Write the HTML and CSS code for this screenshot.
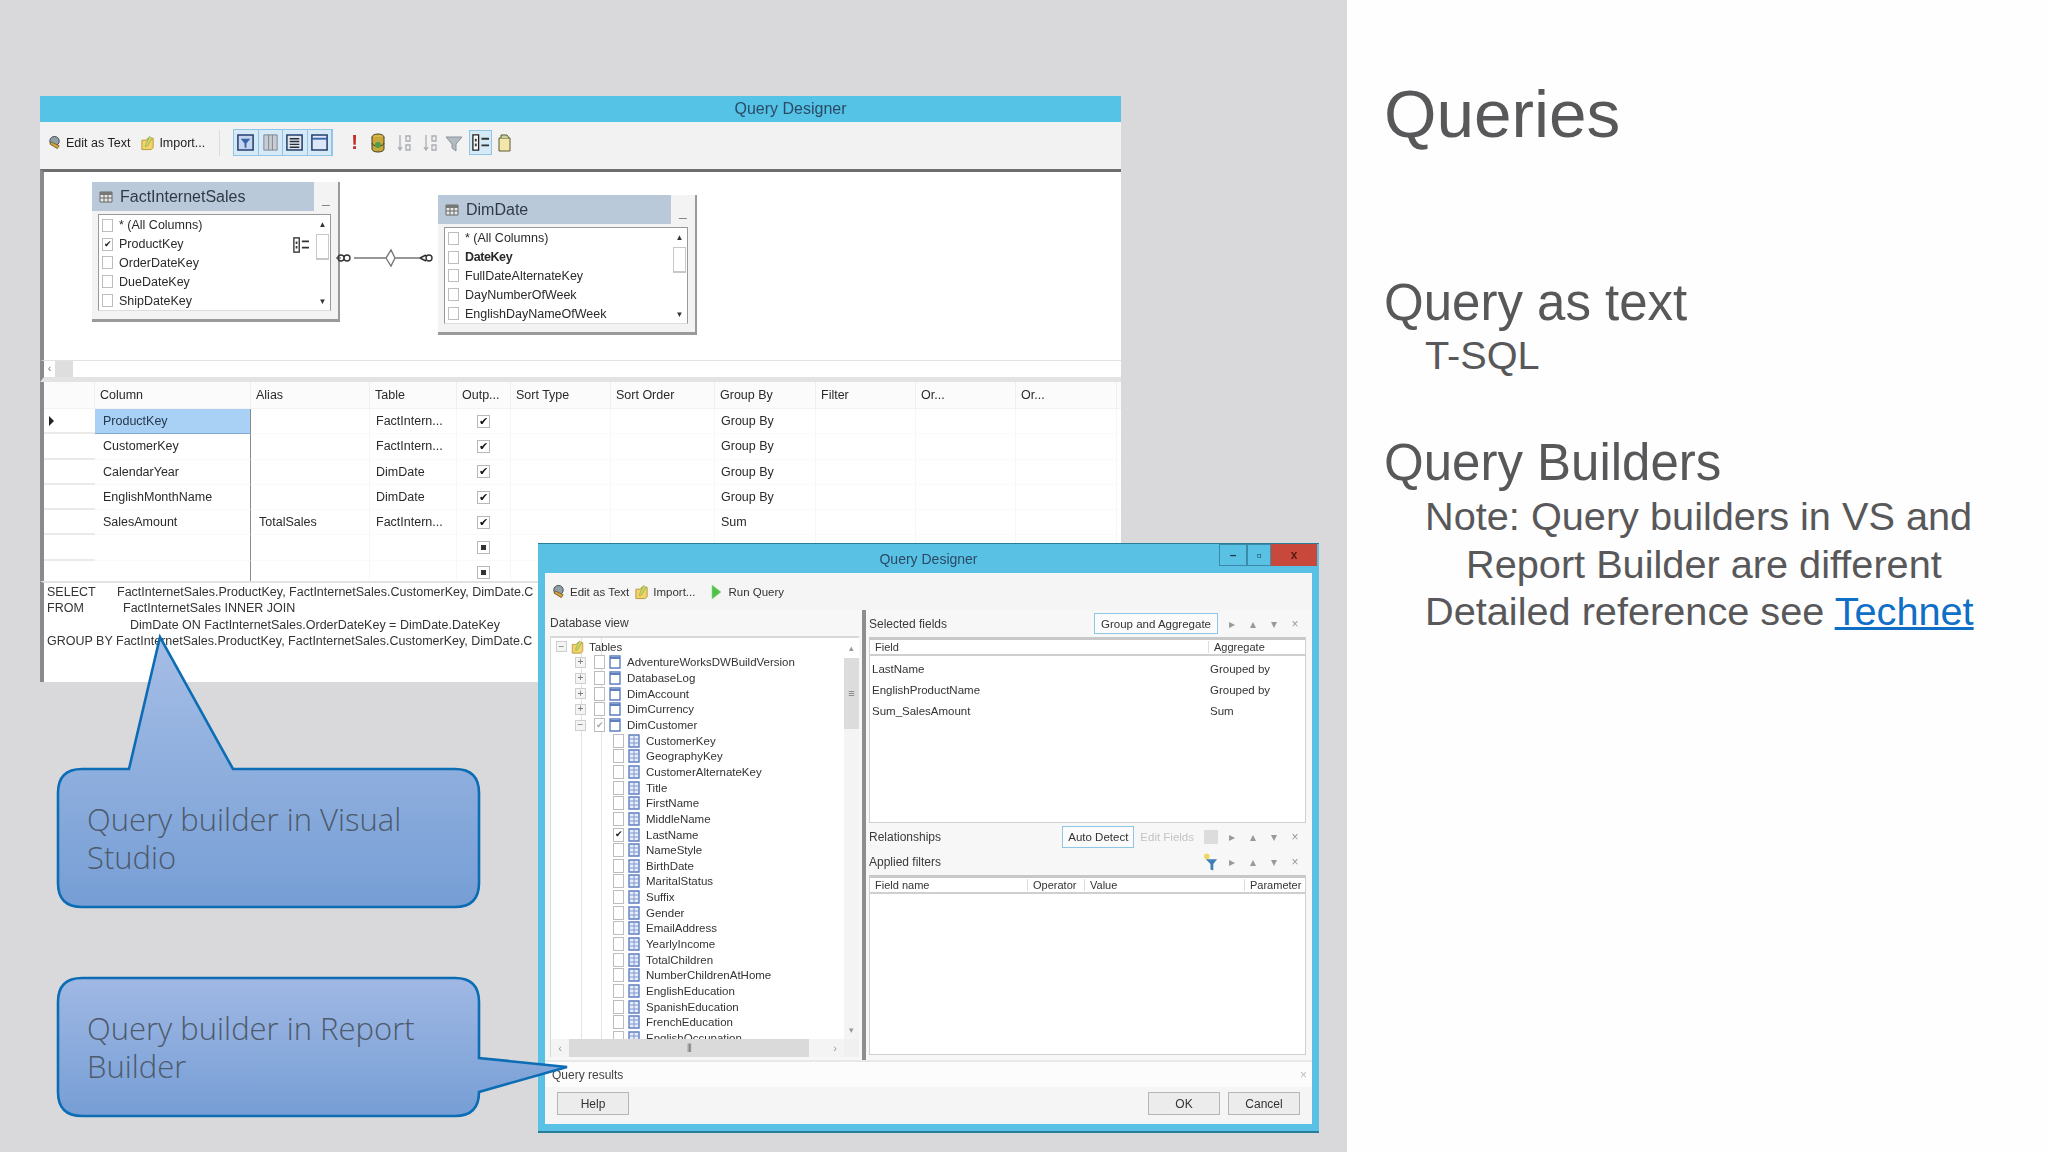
FILE: index.html
```html
<!DOCTYPE html>
<html lang="en">
<head>
<meta charset="utf-8">
<title>Queries</title>
<link rel="stylesheet" href="styles.css">
</head>
<body>
<svg class="defs" width="0" height="0" aria-hidden="true">
  <defs>
    <symbol id="i-table" viewBox="0 0 14 14"><path d="M1 2h12v10H1z" fill="#e8e8e8" stroke="#666"/><path d="M1 2h12v3H1z" fill="#777"/><path d="M5 5v7M9 5v7M1 8h12" stroke="#666"/></symbol>
    <symbol id="i-col" viewBox="0 0 12 14"><path d="M1 1h10v12H1z" fill="#e6ecf9" stroke="#5f7fc0" stroke-width="1.4"/><path d="M6 1v12M1 5h10M1 9h10" stroke="#7f98d0"/></symbol>
    <symbol id="i-tbl" viewBox="0 0 12 14"><path d="M1 1h10v12H1z" fill="#fff" stroke="#5f7fbf" stroke-width="1.4"/><path d="M1 3h10" stroke="#5f7fbf" stroke-width="2"/></symbol>
    <symbol id="i-edit" viewBox="0 0 16 16"><circle cx="8" cy="6" r="5" fill="#8fa0a8" stroke="#444"/><path d="M3 9l8 5 2-3-8-4z" fill="#d8a23a" stroke="#5a4a20" stroke-width=".7"/></symbol>
    <symbol id="i-folder" viewBox="0 0 16 16"><path d="M2 5h5l1-2h6v10l-2 2H2z" fill="#f1d36b" stroke="#b8983a"/><path d="M10 1l3 2-5 8-2 1 0-2z" fill="#c9d96a" stroke="#8a9a3a" stroke-width=".6"/></symbol>
    <symbol id="i-play" viewBox="0 0 12 16"><path d="M2 1l9 7-9 7z" fill="#53c04a" stroke="#8ddc84" stroke-width=".6"/></symbol>
    <symbol id="i-diagram" viewBox="0 0 20 22"><path d="M2 3h16v16H2z" fill="#c5d5ef" stroke="#24406f" stroke-width="1.6"/><path d="M5 7h10l-4 5v5l-2-1v-4z" fill="#3b64a8"/></symbol>
    <symbol id="i-grid" viewBox="0 0 20 22"><path d="M3 3h14v16H3z" fill="#c9ccd2" stroke="#7d8592"/><path d="M8 3v16M12 3v16" stroke="#7d8592"/></symbol>
    <symbol id="i-sql" viewBox="0 0 20 22"><path d="M2 3h16v16H2z" fill="#dfe3ea" stroke="#24406f" stroke-width="1.6"/><path d="M5 7h10M5 10h10M5 13h10M5 16h10" stroke="#24303f" stroke-width="1.5"/></symbol>
    <symbol id="i-result" viewBox="0 0 20 22"><path d="M2 3h16v16H2z" fill="#dde7f7" stroke="#24406f" stroke-width="1.6"/><path d="M2 7h16" stroke="#3b64a8" stroke-width="2"/></symbol>
    <symbol id="i-db" viewBox="0 0 16 22"><ellipse cx="8" cy="5" rx="6" ry="3" fill="#d8b648" stroke="#4a4020"/><path d="M2 5v12c0 4 12 4 12 0V5" fill="#c7a83a" stroke="#4a4020"/><path d="M2 11c0 4 12 4 12 0" fill="none" stroke="#4a4020"/><circle cx="8" cy="13" r="3" fill="#4f9c4a"/></symbol>
    <symbol id="i-sort" viewBox="0 0 16 22"><path d="M4 3v15M2 15l2 3 2-3M10 4h4v5h-4zM10 13h4v5h-4z" fill="none" stroke="#a9adb2" stroke-width="1.3"/></symbol>
    <symbol id="i-funnel" viewBox="0 0 18 22"><path d="M1 5h16l-6 7v7l-4-3v-4z" fill="#b4bac2" stroke="#8b929b"/></symbol>
    <symbol id="i-key" viewBox="0 0 20 18"><path d="M2 1h6v16H2zM2 1h3M2 17h3" fill="#fff" stroke="#222" stroke-width="1.4"/><path d="M4 5h2v3H4zM4 10h2v3H4z" fill="#3a3a3a"/><path d="M11 5h8M11 12h8" stroke="#333" stroke-width="2"/></symbol>
    <symbol id="i-note" viewBox="0 0 16 22"><path d="M2 6h11v13H2z" fill="#f3e6a8" stroke="#5b5b3a"/><path d="M4 6V3h6l2 3" fill="#c9d49a" stroke="#5b5b3a"/></symbol>
    <symbol id="i-filter" viewBox="0 0 16 20"><circle cx="4" cy="4" r="3" fill="#f0d860"/><path d="M3 7h12l-4 5v7l-3-1v-6z" fill="#3f7fb5"/></symbol>
  </defs>
</svg>

<main class="slide">
  <section class="canvas">
    <div class="window vs">
      <div class="vs-title">Query Designer</div>
      <div class="vs-toolbar">
        <svg class="ti"><use href="#i-edit"/></svg><span class="tt">Edit as Text</span>
        <svg class="ti ti-gap"><use href="#i-folder"/></svg><span class="tt">Import...</span>
        <span class="tsep"></span>
        <span class="tgroup">
          <span class="tb"><svg><use href="#i-diagram"/></svg></span>
          <span class="tb"><svg><use href="#i-grid"/></svg></span>
          <span class="tb"><svg><use href="#i-sql"/></svg></span>
          <span class="tb"><svg><use href="#i-result"/></svg></span>
        </span>
        <span class="bang">!</span>
        <svg class="ts ts-db"><use href="#i-db"/></svg>
        <svg class="ts ts-a"><use href="#i-sort"/></svg>
        <svg class="ts ts-b"><use href="#i-sort"/></svg>
        <svg class="ts ts-c"><use href="#i-funnel"/></svg>
        <span class="tb tb-active"><svg><use href="#i-key"/></svg></span>
        <svg class="ts ts-d"><use href="#i-note"/></svg>
      </div>

      <div class="diagram">
        <div class="tbl tbl-fact">
          <div class="tbl-head"><div class="tbl-name"><svg class="tbl-ic"><use href="#i-table"/></svg>FactInternetSales</div><span class="tbl-min">_</span></div>
          <div class="tbl-list">
            <div class="tbl-rows">
              <div class="tr"><span class="box"></span>* (All Columns)</div>
              <div class="tr"><span class="box on">✔</span>ProductKey<svg class="keyi"><use href="#i-key"/></svg></div>
              <div class="tr"><span class="box"></span>OrderDateKey</div>
              <div class="tr"><span class="box"></span>DueDateKey</div>
              <div class="tr"><span class="box"></span>ShipDateKey</div>
            </div>
            <div class="tbl-bar"><span class="sb-up">▲</span><span class="sb-thumb"></span><span class="sb-dn">▼</span></div>
          </div>
        </div>
        <svg class="link" viewBox="0 0 100 24"><path d="M0 13h5M18 13h32l5-8 4 8-4 8-5-8M59 13h25" fill="none" stroke="#777" stroke-width="1.4"/><path d="M2 13a3 3 0 1 0 6 0a3 3 0 1 0-6 0M8 13a3 3 0 1 0 6 0a3 3 0 1 0-6 0M84 13l6-3M84 13l6 3M90 13a3 3 0 1 0 6 0a3 3 0 1 0-6 0" fill="none" stroke="#333" stroke-width="1.4"/></svg>
        <div class="tbl tbl-dim">
          <div class="tbl-head"><div class="tbl-name"><svg class="tbl-ic"><use href="#i-table"/></svg>DimDate</div><span class="tbl-min">_</span></div>
          <div class="tbl-list">
            <div class="tbl-rows">
              <div class="tr"><span class="box"></span>* (All Columns)</div>
              <div class="tr tr-b"><span class="box"></span>DateKey</div>
              <div class="tr"><span class="box"></span>FullDateAlternateKey</div>
              <div class="tr"><span class="box"></span>DayNumberOfWeek</div>
              <div class="tr"><span class="box"></span>EnglishDayNameOfWeek</div>
            </div>
            <div class="tbl-bar"><span class="sb-up">▲</span><span class="sb-thumb"></span><span class="sb-dn">▼</span></div>
          </div>
        </div>
      </div>

      <div class="vs-hscroll"><span class="hs-arrow">‹</span><span class="hs-thumb"></span></div>

      <div class="qgrid">
        <div class="gh gh0"></div><div class="gh">Column</div><div class="gh">Alias</div><div class="gh">Table</div><div class="gh">Outp...</div><div class="gh">Sort Type</div><div class="gh">Sort Order</div><div class="gh">Group By</div><div class="gh">Filter</div><div class="gh">Or...</div><div class="gh">Or...</div><div class="gh"></div>

        <div class="gc g0"><span class="cursor"></span></div><div class="gc g1 sel">ProductKey</div><div class="gc g2"></div><div class="gc">FactIntern...</div><div class="gc gk"><span class="chk">✔</span></div><div class="gc"></div><div class="gc"></div><div class="gc">Group By</div><div class="gc"></div><div class="gc"></div><div class="gc"></div><div class="gc"></div>

        <div class="gc g0"></div><div class="gc g1">CustomerKey</div><div class="gc g2"></div><div class="gc">FactIntern...</div><div class="gc gk"><span class="chk">✔</span></div><div class="gc"></div><div class="gc"></div><div class="gc">Group By</div><div class="gc"></div><div class="gc"></div><div class="gc"></div><div class="gc"></div>

        <div class="gc g0"></div><div class="gc g1">CalendarYear</div><div class="gc g2"></div><div class="gc">DimDate</div><div class="gc gk"><span class="chk">✔</span></div><div class="gc"></div><div class="gc"></div><div class="gc">Group By</div><div class="gc"></div><div class="gc"></div><div class="gc"></div><div class="gc"></div>

        <div class="gc g0"></div><div class="gc g1">EnglishMonthName</div><div class="gc g2"></div><div class="gc">DimDate</div><div class="gc gk"><span class="chk">✔</span></div><div class="gc"></div><div class="gc"></div><div class="gc">Group By</div><div class="gc"></div><div class="gc"></div><div class="gc"></div><div class="gc"></div>

        <div class="gc g0"></div><div class="gc g1">SalesAmount</div><div class="gc g2">TotalSales</div><div class="gc">FactIntern...</div><div class="gc gk"><span class="chk">✔</span></div><div class="gc"></div><div class="gc"></div><div class="gc">Sum</div><div class="gc"></div><div class="gc"></div><div class="gc"></div><div class="gc"></div>

        <div class="gc g0"></div><div class="gc g1"></div><div class="gc g2"></div><div class="gc"></div><div class="gc gk"><span class="chk ind"></span></div><div class="gc"></div><div class="gc"></div><div class="gc"></div><div class="gc"></div><div class="gc"></div><div class="gc"></div><div class="gc"></div>

        <div class="gc g0"></div><div class="gc g1"></div><div class="gc g2"></div><div class="gc"></div><div class="gc gk"><span class="chk ind"></span></div><div class="gc"></div><div class="gc"></div><div class="gc"></div><div class="gc"></div><div class="gc"></div><div class="gc"></div><div class="gc"></div>
      </div>

      <div class="sql">
        <div class="sql-l"><span class="kw">SELECT</span><span class="s1">FactInternetSales.ProductKey, FactInternetSales.CustomerKey, DimDate.C</span></div>
        <div class="sql-l"><span class="kw">FROM</span><span class="s2">FactInternetSales INNER JOIN</span></div>
        <div class="sql-l"><span class="s3">DimDate ON FactInternetSales.OrderDateKey = DimDate.DateKey</span></div>
        <div class="sql-l">GROUP BY FactInternetSales.ProductKey, FactInternetSales.CustomerKey, DimDate.C</div>
      </div>
    </div>

    <div class="callout callout-vs">
      <svg class="callout-shape" viewBox="0 -132 421 270">
        <defs><linearGradient id="g1" x1="0" y1="0" x2="0" y2="1"><stop offset="0" stop-color="#a6bee6"/><stop offset="1" stop-color="#769ed5"/></linearGradient></defs>
        <path d="M24 0H71L102-132 175 0H397Q421 0 421 24V114Q421 138 397 138H24Q0 138 0 114V24Q0 0 24 0Z" fill="url(#g1)" stroke="#0c6db5" stroke-width="2.6"/>
      </svg>
      <p class="callout-text">Query builder in Visual Studio</p>
    </div>

    <div class="window rb">
      <div class="rb-title">
        <span class="rb-title-text">Query Designer</span>
        <div class="rb-controls"><span class="wc wc-min">–</span><span class="wc wc-max">▫</span><span class="wc wc-close">x</span></div>
      </div>
      <div class="rb-inner">
        <div class="rb-toolbar">
          <svg class="ti"><use href="#i-edit"/></svg><span class="rt">Edit as Text</span>
          <svg class="ti ti-gap2"><use href="#i-folder"/></svg><span class="rt">Import...</span>
          <svg class="ti-play"><use href="#i-play"/></svg><span class="rt">Run Query</span>
        </div>
        <div class="rb-main">
          <div class="rb-left">
            <div class="rb-label">Database view</div>
            <div class="tree-frame">
              <div class="tree">
                <div class="node n0"><span class="exp">−</span><svg class="fold"><use href="#i-folder"/></svg>Tables</div>
                <div class="node n1"><span class="exp">+</span><span class="box"></span><svg class="ni"><use href="#i-tbl"/></svg>AdventureWorksDWBuildVersion</div>
                <div class="node n1"><span class="exp">+</span><span class="box"></span><svg class="ni"><use href="#i-tbl"/></svg>DatabaseLog</div>
                <div class="node n1"><span class="exp">+</span><span class="box"></span><svg class="ni"><use href="#i-tbl"/></svg>DimAccount</div>
                <div class="node n1"><span class="exp">+</span><span class="box"></span><svg class="ni"><use href="#i-tbl"/></svg>DimCurrency</div>
                <div class="node n1"><span class="exp">−</span><span class="box part">✔</span><svg class="ni"><use href="#i-tbl"/></svg>DimCustomer</div>
                <div class="node n2"><span class="box"></span><svg class="ni"><use href="#i-col"/></svg>CustomerKey</div>
                <div class="node n2"><span class="box"></span><svg class="ni"><use href="#i-col"/></svg>GeographyKey</div>
                <div class="node n2"><span class="box"></span><svg class="ni"><use href="#i-col"/></svg>CustomerAlternateKey</div>
                <div class="node n2"><span class="box"></span><svg class="ni"><use href="#i-col"/></svg>Title</div>
                <div class="node n2"><span class="box"></span><svg class="ni"><use href="#i-col"/></svg>FirstName</div>
                <div class="node n2"><span class="box"></span><svg class="ni"><use href="#i-col"/></svg>MiddleName</div>
                <div class="node n2"><span class="box on">✔</span><svg class="ni"><use href="#i-col"/></svg>LastName</div>
                <div class="node n2"><span class="box"></span><svg class="ni"><use href="#i-col"/></svg>NameStyle</div>
                <div class="node n2"><span class="box"></span><svg class="ni"><use href="#i-col"/></svg>BirthDate</div>
                <div class="node n2"><span class="box"></span><svg class="ni"><use href="#i-col"/></svg>MaritalStatus</div>
                <div class="node n2"><span class="box"></span><svg class="ni"><use href="#i-col"/></svg>Suffix</div>
                <div class="node n2"><span class="box"></span><svg class="ni"><use href="#i-col"/></svg>Gender</div>
                <div class="node n2"><span class="box"></span><svg class="ni"><use href="#i-col"/></svg>EmailAddress</div>
                <div class="node n2"><span class="box"></span><svg class="ni"><use href="#i-col"/></svg>YearlyIncome</div>
                <div class="node n2"><span class="box"></span><svg class="ni"><use href="#i-col"/></svg>TotalChildren</div>
                <div class="node n2"><span class="box"></span><svg class="ni"><use href="#i-col"/></svg>NumberChildrenAtHome</div>
                <div class="node n2"><span class="box"></span><svg class="ni"><use href="#i-col"/></svg>EnglishEducation</div>
                <div class="node n2"><span class="box"></span><svg class="ni"><use href="#i-col"/></svg>SpanishEducation</div>
                <div class="node n2"><span class="box"></span><svg class="ni"><use href="#i-col"/></svg>FrenchEducation</div>
                <div class="node n2"><span class="box"></span><svg class="ni"><use href="#i-col"/></svg>EnglishOccupation</div>
              </div>
              <div class="tree-v"><span class="tv-up">▴</span><span class="tv-thumb">≡</span><span class="tv-dn">▾</span></div>
              <div class="tree-h"><span class="th-arrow">‹</span><span class="th-thumb">⦀</span><span class="th-arrow th-r">›</span></div>
              <div class="tree-corner"></div>
            </div>
          </div>
          <div class="rb-split"></div>
          <div class="rb-right">
            <div class="pane-head">
              <span class="rb-label">Selected fields</span>
              <span class="btn-flat btn-ga">Group and Aggregate</span>
              <span class="arrows"><i>▸</i><i>▴</i><i>▾</i><i>×</i></span>
            </div>
            <div class="list-frame list-fields">
              <div class="lf-head lf-fields"><span>Field</span><span>Aggregate</span></div>
              <div class="lf-row lf-fields"><span>LastName</span><span>Grouped by</span></div>
              <div class="lf-row lf-fields"><span>EnglishProductName</span><span>Grouped by</span></div>
              <div class="lf-row lf-fields"><span>Sum_SalesAmount</span><span>Sum</span></div>
            </div>
            <div class="pane-head pane-rel">
              <span class="rb-label">Relationships</span>
              <span class="btn-flat btn-ad">Auto Detect</span>
              <span class="dim">Edit Fields</span>
              <span class="mini-box"></span>
              <span class="arrows"><i>▸</i><i>▴</i><i>▾</i><i>×</i></span>
            </div>
            <div class="pane-head pane-fil">
              <span class="rb-label">Applied filters</span>
              <svg class="fil"><use href="#i-filter"/></svg>
              <span class="arrows arrows-fil"><i>▸</i><i>▴</i><i>▾</i><i>×</i></span>
            </div>
            <div class="list-frame list-filters">
              <div class="lf-head lf-filt"><span>Field name</span><span>Operator</span><span>Value</span><span>Parameter</span></div>
            </div>
          </div>
        </div>
        <div class="rb-results"><span>Query results</span><i>×</i></div>
        <div class="rb-foot">
          <span class="btn">Help</span>
          <span class="btn btn-ok">OK</span>
          <span class="btn">Cancel</span>
        </div>
      </div>
    </div>

    <div class="callout callout-rb">
      <svg class="callout-shape callout-shape-rb" viewBox="0 0 510 138">
        <defs><linearGradient id="g2" x1="0" y1="0" x2="0" y2="1"><stop offset="0" stop-color="#a0b8e4"/><stop offset="1" stop-color="#769ed5"/></linearGradient></defs>
        <path d="M24 0H397Q421 0 421 24V80L509 89 421 114Q421 138 397 138H24Q0 138 0 114V24Q0 0 24 0Z" fill="url(#g2)" stroke="#0c6db5" stroke-width="2.6"/>
      </svg>
      <p class="callout-text">Query builder in Report Builder</p>
    </div>
  </section>

  <section class="notes">
    <h1 class="n-title">Queries</h1>
    <h2 class="n-h n-h-first">Query as text</h2>
    <p class="n-p n-p-tsql">T-SQL</p>
    <h2 class="n-h n-h-second">Query Builders</h2>
    <p class="n-p n-p-note">Note: Query builders in VS and Report Builder are different</p>
    <p class="n-p">Detailed reference see <a class="n-link" href="#">Technet</a></p>
  </section>
</main>
</body>
</html>
```

FILE: styles.css
```css
* { box-sizing: border-box; }
html, body { margin: 0; padding: 0; height: 100%; }
body { background: #fefefe; font-family: "Liberation Sans", Arial, sans-serif; overflow: hidden; }
.defs { position: absolute; }
.slide { display: flex; width: 2048px; height: 1152px; }
.canvas { position: relative; width: 1347px; height: 1152px; background: #d9d9db; flex: none; }

/* right column */
.notes { flex: 1; padding: 74px 0 0 37px; color: #58585a; }
.n-title { margin: 0; font-weight: 400; font-size: 67.5px; line-height: 80px; }
.n-h { margin: 0; font-weight: 400; font-size: 51px; line-height: 60px; }
.n-h-first { margin-top: 119px; }
.n-h-second { margin-top: 53px; }
.n-p { margin: 0 0 0 82px; font-size: 39.7px; line-height: 47.8px; text-indent: -41px; max-width: 580px; }
.n-p-tsql { margin-top: -1px; }
.n-p-note { margin-top: 0; }
.n-link { color: #0f6fc6; text-decoration: underline; }

/* shared */
.window { position: absolute; filter: blur(.7px); color: #333; font-size: 13px; }
.box { display: inline-flex; align-items: center; justify-content: center; flex: none; width: 11px; height: 13px; border: 1px solid #bdbdbd; background: #fff; font-size: 9px; line-height: 1; color: #222; }
.part { color: #aaa; }

/* visual studio window */
.vs { left: 40px; top: 96px; width: 1081px; height: 586px; background: #fff; display: flex; flex-direction: column; }
.vs-title { flex: none; height: 26px; background: #54c3e6; padding-left: 420px; display: flex; align-items: center; justify-content: center; font-size: 16px; color: #2b4a66; }
.vs-toolbar { flex: none; height: 47px; background: #f2f2f2; display: flex; align-items: center; padding: 0 0 6px 7px; }
.ti { width: 15px; height: 16px; flex: none; margin-right: 4px; }
.ti-gap { margin-left: 10px; }
.tt { font-size: 12.5px; color: #222; }
.tsep { width: 1px; height: 26px; background: #dcdcdc; margin: 0 13px 0 14px; }
.tgroup { display: flex; border: 1px solid #8fc6e6; background: #d5e9f7; }
.tb { display: flex; align-items: center; justify-content: center; width: 24.5px; height: 25px; background: #d5e9f7; border-right: 1px solid #8fc6e6; }
.tb svg { width: 19px; height: 21px; }
.bang { font-size: 20px; font-weight: 700; color: #c02a20; margin-left: 18px; width: 10px; }
.ts { width: 16px; height: 22px; flex: none; }
.ts-db { margin-left: 9px; }
.ts-a { margin-left: 10px; }
.ts-b { margin-left: 10px; }
.ts-c { margin-left: 7px; width: 18px; }
.tb-active { margin-left: 6px; border: 1px solid #8fc6e6; width: 23px; }
.ts-d { margin-left: 5px; }

.diagram { flex: none; position: relative; height: 191px; background: #fff; border-top: 3px solid #6e6e6e; border-left: 4px solid #8a8a8a; }
.tbl { position: absolute; background: #f3f3f3; border-right: 2px solid #9a9a9a; border-bottom: 3px solid #9a9a9a; display: flex; flex-direction: column; }
.tbl-fact { left: 48px; top: 10px; width: 248px; height: 140px; }
.tbl-dim { left: 394px; top: 23px; width: 259px; height: 140px; }
.tbl-head { flex: none; height: 29px; display: flex; }
.tbl-name { flex: 1; background: #b9c9d9; display: flex; align-items: center; font-size: 16px; color: #2f3a46; padding-left: 7px; }
.tbl-ic { width: 14px; height: 14px; margin-right: 7px; flex: none; }
.tbl-min { width: 24px; display: flex; align-items: flex-end; justify-content: center; font-weight: 700; background: #f3f3f3; padding-bottom: 4px; font-size: 14px; }
.tbl-list { flex: none; display: flex; margin: 3px 7px 0 6px; height: 97px; background: #fff; border: 1px solid #999; border-bottom-color: #ddd; }
.tbl-rows { flex: 1; overflow: hidden; position: relative; }
.tr { position: relative; display: flex; align-items: center; gap: 6px; height: 18.8px; font-size: 12.5px; color: #2a2a2a; padding-left: 3px; white-space: nowrap; }
.tr:first-child { margin-top: 1px; }
.tr-b { font-weight: 700; letter-spacing: -.4px; }
.keyi { position: absolute; right: 4px; top: 2px; width: 20px; height: 16px; }
.tbl-bar { flex: none; width: 15px; display: flex; flex-direction: column; align-items: center; font-size: 8px; background: #fff; color: #333; }
.sb-up { height: 19px; line-height: 19px; }
.sb-thumb { width: 13px; height: 26px; border: 1px solid #c8c8c8; border-bottom-width: 2px; }
.sb-dn { margin-top: auto; height: 16px; line-height: 16px; }
.link { position: absolute; left: 292px; top: 73px; width: 100px; height: 24px; }

.vs-hscroll { flex: none; height: 22px; background: #fff; display: flex; align-items: stretch; border-left: 4px solid #8a8a8a; border-top: 1px solid #e2e2e2; border-bottom: 5px solid #e3e3e3; }
.hs-arrow { width: 11px; font-size: 11px; line-height: 15px; text-align: center; color: #777; }
.hs-thumb { width: 18px; background: #dedede; }

.qgrid { flex: none; height: 199px; overflow: hidden; display: grid; grid-template-columns: 51px 156px 119px 87px 54px 100px 104px 101px 100px 100px 101px 1fr; grid-template-rows: 27px repeat(7, 25.3px); background: #fff; border-left: 4px solid #8a8a8a; }
.gh { font-size: 12.5px; color: #2a2a2a; display: flex; align-items: center; padding-left: 5px; background: #fbfbfb; border-right: 1px solid #efefef; border-bottom: 1px solid #f2f2f2; white-space: nowrap; overflow: hidden; }
.gc { font-size: 12.5px; color: #2a2a2a; display: flex; align-items: center; padding-left: 6px; border-right: 1px solid #f7f7f7; border-bottom: 1px solid #fafafa; white-space: nowrap; overflow: hidden; }
.g0 { border-right: 0; border-bottom: 2px solid #eaeaea; }
.g1 { padding-left: 8px; border-right: 1px solid #8a8a8a; }
.g2 { padding-left: 8px; }
.sel { background: #a9d1f5; border-bottom: 1px solid #7fa8d0; color: #26384e; }
.gk { justify-content: center; padding-left: 0; }
.cursor { width: 0; height: 0; border-left: 5px solid #222; border-top: 5px solid transparent; border-bottom: 5px solid transparent; margin-left: -1px; }
.chk { display: flex; align-items: center; justify-content: center; width: 13px; height: 13px; border: 1px solid #b8b8b8; background: #fff; font-size: 11px; line-height: 1; color: #111; }
.ind::before { content: ""; width: 5px; height: 5px; background: #333; }

.sql { flex: 1; background: #fff; border-left: 4px solid #8a8a8a; border-top: 2px solid #e3e3e3; padding: 1px 0 0 3px; overflow: hidden; font-size: 12.5px; color: #333; }
.sql-l { display: flex; height: 16.4px; line-height: 16.4px; white-space: nowrap; }
.kw { width: 70px; flex: none; }
.s2 { margin-left: 6px; }
.s3 { margin-left: 83px; }

/* callouts */
.callout { position: absolute; left: 58px; width: 421px; height: 138px; margin: 0; }
.callout-vs { top: 769px; }
.callout-rb { top: 978px; }
.callout-shape { position: absolute; left: 0; top: -132px; width: 421px; height: 270px; overflow: visible; }
.callout-shape-rb { top: 0; width: 510px; height: 138px; }
.callout-text { position: relative; margin: 0; padding: 32px 30px 0 29px; font-family: "Open Sans", "Noto Sans", sans-serif; font-weight: 300; font-size: 31px; line-height: 37.5px; color: #4d5a6c; }

/* report builder window */
.rb { left: 538px; top: 543px; width: 781px; height: 590px; background: #58c1e4; border-bottom: 2px solid #2a7d99; border-top: 1px solid #2a7d99; padding: 0 7px 7px; display: flex; flex-direction: column; font-size: 12px; }
.rb-title { flex: none; height: 29px; position: relative; display: flex; align-items: center; justify-content: center; font-size: 14px; color: #2b4a66; }
.rb-controls { position: absolute; right: -5px; top: 0; display: flex; height: 22px; }
.wc { display: flex; align-items: center; justify-content: center; color: #1e3a50; font-weight: 700; font-size: 12px; border: 1px solid #3b8aa8; }
.wc-min { width: 28px; }
.wc-max { width: 24px; font-size: 14px; }
.wc-close { width: 46px; background: #c8493c; color: #5a1a14; border: 0; }
.rb-inner { flex: 1; min-height: 0; background: #f7f7f7; display: flex; flex-direction: column; }
.rb-toolbar { flex: none; height: 37px; display: flex; align-items: center; padding-left: 6px; background: #f5f5f5; }
.rt { font-size: 11.5px; color: #333; }
.ti-gap2 { margin-left: 5px; }
.ti-play { width: 12px; height: 16px; margin: 0 6px 0 15px; flex: none; }
.rb-main { flex: none; height: 450px; display: flex; }
.rb-left { flex: none; width: 317px; display: flex; flex-direction: column; padding-left: 5px; }
.rb-label { font-size: 12px; color: #3a3a3a; white-space: nowrap; }
.rb-left > .rb-label { flex: none; height: 26px; display: flex; align-items: center; }
.tree-frame { flex: none; width: 309px; height: 421px; display: grid; grid-template-columns: 1fr 15px; grid-template-rows: 1fr 18px; background: #fff; border-top: 2px solid #d8d8d8; border-left: 1px solid #d8d8d8; }
.tree { min-height: 0; overflow: hidden; padding-top: 1px; background: linear-gradient(#e4e4e4,#e4e4e4) 30px 0/1px 100% no-repeat, linear-gradient(#e4e4e4,#e4e4e4) 50px 0/1px 100% no-repeat, #fff; }
.node { display: flex; align-items: center; height: 15.65px; font-size: 11.5px; color: #333; white-space: nowrap; }
.n0 { padding-left: 5px; }
.n1 { padding-left: 24px; }
.n2 { padding-left: 62px; }
.exp { display: flex; align-items: center; justify-content: center; width: 11px; height: 11px; flex: none; font-size: 10px; line-height: 1; color: #777; margin-right: 8px; border: 1px solid #cfcfcf; background: #f4f4f4; }
.n0 .exp { margin-right: 3px; }
.node .box { height: 14px; }
.fold { width: 15px; height: 14px; margin-right: 4px; flex: none; }
.ni { width: 12px; height: 14px; margin: 0 6px 0 4px; flex: none; }
.tree-v { background: #f4f4f4; display: flex; flex-direction: column; align-items: center; font-size: 9px; color: #999; }
.tv-up { height: 20px; line-height: 20px; background: #fff; width: 100%; text-align: center; }
.tv-thumb { height: 71px; width: 100%; background: #dcdcdc; text-align: center; line-height: 71px; color: #777; font-size: 11px; }
.tv-dn { margin-top: auto; height: 18px; line-height: 18px; }
.tree-h { display: flex; background: #f4f4f4; font-size: 11px; color: #999; }
.th-arrow { width: 18px; text-align: center; line-height: 18px; }
.th-thumb { width: 240px; background: #dadada; text-align: center; line-height: 18px; color: #666; }
.th-r { margin-left: auto; }
.tree-corner { background: #f0f0f0; }
.rb-split { flex: none; width: 4px; background: #8e8e8e; }
.rb-right { flex: 1; min-width: 0; display: flex; flex-direction: column; padding: 0 6px 0 3px; }
.pane-head { flex: none; display: flex; align-items: center; }
.pane-head:first-child { height: 27px; }
.btn-flat { display: flex; align-items: center; justify-content: center; height: 21px; border: 1px solid #8fc6e6; background: #fbfbfb; font-size: 11.5px; color: #333; white-space: nowrap; }
.btn-ga { width: 124px; margin-left: auto; }
.btn-ad { width: 72px; height: 22px; margin-left: auto; }
.dim { font-size: 11.5px; color: #c4c4c4; margin-left: 6px; white-space: nowrap; }
.mini-box { width: 14px; height: 14px; background: #dcdcdc; margin-left: 10px; }
.arrows { display: flex; font-size: 12px; color: #999; width: 88px; justify-content: space-around; flex: none; padding-left: 4px; }
.arrows i { font-style: normal; }
.list-frame { flex: none; background: #fff; border: 1px solid #cfcfcf; border-top: 3px solid #c8c8c8; }
.list-fields { height: 186px; }
.list-filters { height: 180px; }
.lf-fields { display: grid; grid-template-columns: 338px 1fr; }
.lf-filt { display: grid; grid-template-columns: 157px 57px 160px 1fr; }
.lf-head { height: 16px; align-items: center; font-size: 11px; color: #333; background: #fff; border-bottom: 2px solid #cfcfcf; }
.lf-head span { padding-left: 5px; white-space: nowrap; overflow: hidden; }
.lf-head span + span { border-left: 1px solid #ddd; }
.lf-row { height: 21.3px; align-items: center; font-size: 11.5px; color: #333; white-space: nowrap; }
.lf-row:nth-child(2) { margin-top: 2px; }
.lf-row span { padding-left: 2px; }
.pane-rel { height: 27px; }
.pane-fil { height: 25px; padding-bottom: 2px; }
.fil { width: 15px; height: 20px; margin-left: auto; }
.rb-results { flex: none; height: 27px; display: flex; align-items: center; justify-content: space-between; padding: 0 5px 0 7px; background: #fcfcfc; font-size: 12px; color: #444; border-top: 2px solid #e8e8e8; }
.rb-results i { font-style: normal; color: #bbb; }
.rb-foot { flex: 1; display: flex; align-items: flex-start; padding: 5px 12px 0 12px; gap: 8px; background: #f5f5f5; }
.btn { display: flex; align-items: center; justify-content: center; width: 72px; height: 23px; background: #ececec; border: 1px solid #b5b5b5; font-size: 12px; color: #333; }
.btn-ok { margin-left: auto; }
```
